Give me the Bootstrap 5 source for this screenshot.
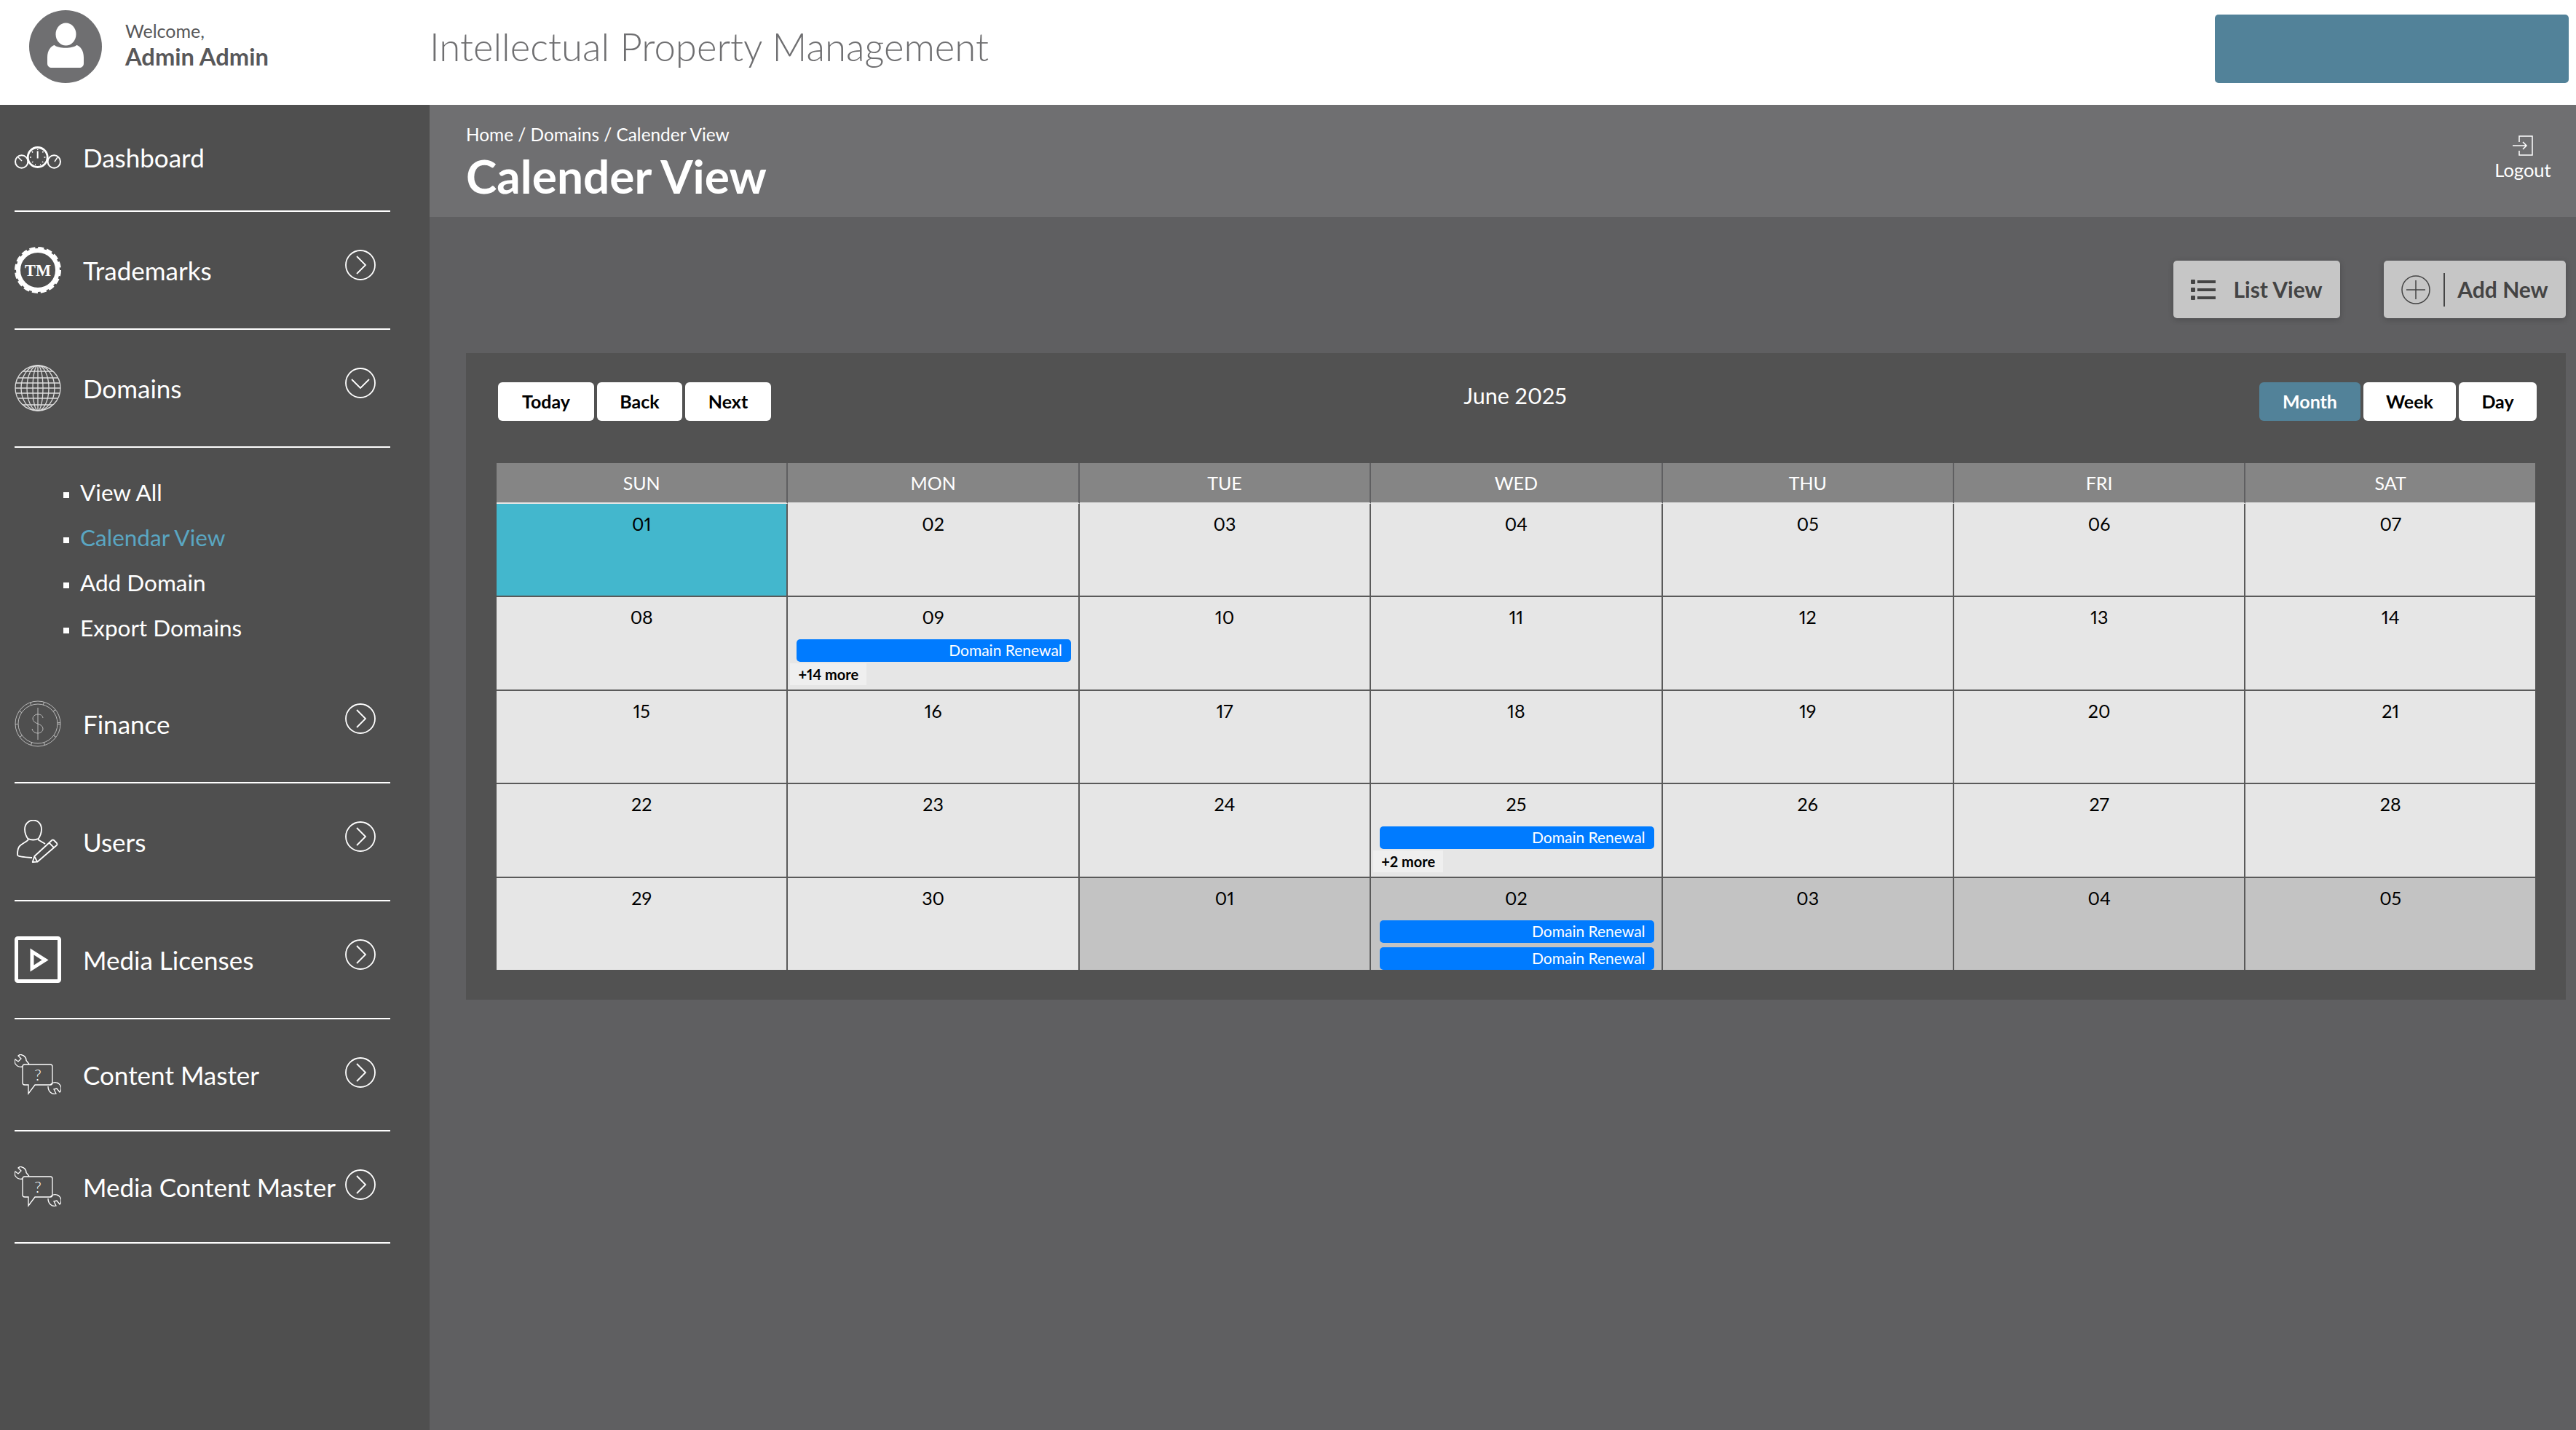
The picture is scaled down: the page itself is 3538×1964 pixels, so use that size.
<!DOCTYPE html>
<html lang="en">
<head>
    <meta charset="UTF-8">
    <title>Intellectual Property Management</title>
    <link href="https://cdn.jsdelivr.net/npm/bootstrap@5.3.0/dist/css/bootstrap.min.css" rel="stylesheet">
    <style>
        body { font-family: "Lato", "Liberation Sans", sans-serif; background: #5f5f61; color: #fff; min-height: 1964px; font-variant-numeric: proportional-nums; }

        /* Top header */
        .top-head { height: 144px; background: #fff; padding-bottom: 16px; }
        .avatar-box { width: 100px; height: 100px; margin-left: 40px; }
        .user-box { width: 450px; padding-left: 32px; margin-bottom: 4px; color: #58585a; }
        .user-hello { font-size: 25px; line-height: 32px; }
        .user-name { font-size: 32.700px; line-height: 40px; font-weight: 700; }
        .app-title { font-size: 52.700px; font-weight: 300; color: #6f6f71; line-height: 1; }
        .top-action { width: 486px; height: 94px; margin: 6px 10px 0 0; background: #528299; border-radius: 5px; border: 0; }

        /* Sidebar */
        .page-wrap { min-height: 1820px; }
        .side-bar { width: 590px; background: #4f4f4f; padding: 0 54px 0 20px; flex-shrink: 0; }
        .side-item { height: 162px; border-bottom: 2px solid #fff; font-size: 35px; color: #fff; text-decoration: none; }
        .side-first { height: 147px; }
        .side-short { height: 154px; }
        .side-ico { width: 94px; flex-shrink: 0; }
        .side-ico svg { display: block; }
        .side-chev { margin: 0 20px 14px auto; flex-shrink: 0; }
        .side-short .side-chev { margin-bottom: 7px; }
        .side-sub { padding: 31px 0 20px 67px; height: 299px; margin: 0; font-size: 31.500px; }
        .side-sub li { height: 62px; }
        .side-sub li::before { content: ""; width: 8px; height: 8px; background: #fff; margin: 6px 15px 0 0; }
        .side-sub a { color: #fff; text-decoration: none; }
        .side-sub a.is-current { color: #5aa6c2; }

        /* Page title bar */
        .crumb-bar { height: 154px; background: #6f6f71; padding: 23px 28px 0 50px; }
        .crumb-text { font-size: 24.400px; line-height: 36px; }
        .page-title { font-size: 64px; font-weight: 700; line-height: 76px; margin: 1px 0 0; }
        .logout-link { color: #fff; text-decoration: none; font-size: 25.500px; line-height: 38px; width: 90px; margin-top: 19px; }

        /* Action buttons */
        .action-row { padding: 60px 14px 48px 50px; gap: 60px; }
        .act-btn { height: 79px; background: #c6c6c6; color: #444; font-size: 30px; font-weight: 700; border: 0; border-radius: 5px; box-shadow: 0 2px 8px rgba(0,0,0,.2); padding: 0; }
        .act-list { width: 229px; gap: 24px; }
        .act-add { width: 250px; }
        .act-sep { width: 2px; height: 46px; background: #444; margin: 0 17px 0 18px; }

        /* Calendar */
        .cal-panel { margin: 0 14px 0 50px; padding: 40px 40px 41px 42px; background: #525252; }
        .cal-bar { height: 53px; margin-bottom: 58px; padding-left: 2px; }
        .cal-btn { height: 53px; background: #fff; color: #000; font-size: 25px; font-weight: 700; border: 0; border-radius: 6px; padding: 0; }
        .cal-btn.is-on { background: #528299; color: #fff; }
        .cal-btn-group { gap: 4px; }
        .w-today { width: 132px; } .w-back { width: 117px; } .w-next { width: 118px; }
        .w-month { width: 139px; } .w-week { width: 127px; } .w-day { width: 107px; }
        .cal-month { font-size: 30.500px; line-height: 40px; margin-top: -2px; }
        .cal-grid { display: grid; grid-template-columns: repeat(6, 400.400px) 1fr; margin-right: 2px; }
        .cal-head { height: 56px; background: #858585; border-right: 2px solid #5f5f61; border-bottom: 2px solid #e6e6e6; font-size: 25px; text-align: center; line-height: 54px; }
        .cal-cell { height: 128.400px; background: #e6e6e6; color: #000; border-right: 2px solid #5a5a5a; border-bottom: 2px solid #5a5a5a; padding-top: 9px; text-align: center; font-size: 25px; line-height: 36px; overflow: hidden; }
        .cal-head:nth-child(7n), .cal-cell:nth-child(7n) { border-right: 0; }
        .cal-cell.is-today { background: #43b7cd; }
        .cal-cell.is-off { background: #c3c3c3; }
        .cal-cell.is-last { height: 126.400px; border-bottom: 0; }
        .cal-day { margin-bottom: 13px; }
        .cal-event { height: 31px; margin: 0 10px 6px 12px; padding-right: 12px; background: #007bff; color: #fff; border-radius: 5px; font-size: 21px; line-height: 30px; text-align: right; }
        .cal-more { display: block; width: fit-content; margin: -4px 0 0 3px; padding: 0 11px; background: #efefef; font-size: 20px; font-weight: 700; line-height: 30px; }
    </style>
</head>
<body>
    <header class="top-head d-flex align-items-center">
        <div class="avatar-box">
            <svg width="100" height="100" viewBox="0 0 100 100"><circle cx="50" cy="50" r="50" fill="#6f6f71"/><ellipse cx="50.500" cy="33" rx="14" ry="15.500" fill="#fff"/><path d="M35 48c5 5 25 5 30 0 5 1 10 7 10 17v8c0 4-3 6-6 6H31c-3 0-6-2-6-6v-8c0-10 5-16 10-17z" fill="#fff"/></svg>
        </div>
        <div class="user-box">
            <div class="user-hello">Welcome,</div>
            <div class="user-name">Admin Admin</div>
        </div>
        <div class="app-title flex-grow-1">Intellectual Property Management</div>
        <button class="top-action" type="button"></button>
    </header>

    <div class="page-wrap d-flex">
        <nav class="side-bar">
            <a href="#" class="side-item side-first d-flex align-items-center">
                <span class="side-ico">
                    <svg width="64" height="32" viewBox="0 0 64 32" fill="none" stroke="#fff" stroke-width="2"><circle cx="9.700" cy="21" r="8.700"/><circle cx="54.300" cy="21" r="8.700"/><path d="M5 15l5 5M59 15l-4 6" stroke-width="1.500"/><circle cx="31.700" cy="15" r="13.500" fill="#4f4f4f" stroke-width="2.800"/><path d="M31.700 6.500v10" stroke-width="2"/><path d="M31.700 4v1M24 7l1 1.500M39.400 7l-1 1.500M21 15h2M40.400 15h2M24 22l1.500-1M39.400 22l-1.500-1M28 25h1M35 25h1" stroke-width="1.500"/></svg>
                </span>
                Dashboard
            </a>
            <a href="#" class="side-item d-flex align-items-center">
                <span class="side-ico">
                    <svg width="64" height="64" viewBox="0 0 64 64" fill="none" stroke="#fff"><circle cx="32" cy="32" r="27" stroke-width="6"/><circle cx="32" cy="32" r="30" stroke-width="4" stroke-dasharray="8 3.780"/><text x="32" y="40" text-anchor="middle" fill="#fff" stroke="none" font-family="Liberation Serif" font-weight="700" font-size="24" textLength="36" lengthAdjust="spacingAndGlyphs">TM</text></svg>
                </span>
                Trademarks
                <svg class="side-chev" width="42" height="42" viewBox="0 0 42 42" fill="none" stroke="#fff" stroke-width="1.800"><circle cx="21" cy="21" r="20"/><path d="M16 9l12 12-12 12"/></svg>
            </a>
            <a href="#" class="side-item d-flex align-items-center">
                <span class="side-ico">
                    <svg width="64" height="64" viewBox="0 0 64 64" fill="none" stroke="#ddd" stroke-width="1.300"><circle cx="32" cy="32" r="31"/><ellipse cx="32" cy="32" rx="23" ry="31"/><ellipse cx="32" cy="32" rx="15" ry="31"/><ellipse cx="32" cy="32" rx="7" ry="31"/><path d="M32 1v62M1 32h62M4 18h56M4 46h56M11 9h42M11 55h42M2 25h60M2 39h60"/></svg>
                </span>
                Domains
                <svg class="side-chev" width="42" height="42" viewBox="0 0 42 42" fill="none" stroke="#fff" stroke-width="1.800"><circle cx="21" cy="21" r="20"/><path d="M9 16l12 12 12-12"/></svg>
            </a>
            <ul class="side-sub list-unstyled">
                <li class="d-flex align-items-center"><a href="#">View All</a></li>
                <li class="d-flex align-items-center"><a href="#" class="is-current">Calendar View</a></li>
                <li class="d-flex align-items-center"><a href="#">Add Domain</a></li>
                <li class="d-flex align-items-center"><a href="#">Export Domains</a></li>
            </ul>
            <a href="#" class="side-item d-flex align-items-center">
                <span class="side-ico">
                    <svg width="64" height="64" viewBox="0 0 64 64" fill="none" stroke="#bbb" stroke-width="1"><circle cx="32" cy="32" r="31"/><circle cx="32" cy="32" r="27"/><circle cx="32" cy="32" r="29" stroke-width="4" stroke-dasharray="1 17"/><path d="M32 10v44"/><path d="M39 24c-1-4-4-5-7-5-4 0-7 3-7 6 0 8 14 6 14 14 0 3-3 6-7 6-4 0-7-2-8-6"/></svg>
                </span>
                Finance
                <svg class="side-chev" width="42" height="42" viewBox="0 0 42 42" fill="none" stroke="#fff" stroke-width="1.800"><circle cx="21" cy="21" r="20"/><path d="M16 9l12 12-12 12"/></svg>
            </a>
            <a href="#" class="side-item d-flex align-items-center">
                <span class="side-ico">
                    <svg width="64" height="60" viewBox="0 0 64 60" fill="none" stroke="#fff" stroke-width="1.800" stroke-linejoin="round"><path d="M19 27c-3-4-5-9-5-14C14 6 19 .5 25.700 .5S37 6 37 13c0 5-2 10-5 14"/><path d="M19 26c3 2 10 2 13 0"/><path d="M19 27c-2 3-8 5-12 9-3 3-3 8-3 12 0 2 5 3 20 4"/><path d="M32 27c3 2 7 4 10 6"/><path d="M24.700 58l2.600-8L51.300 28a2 2 0 0 1 2.700 0l4 4a2 2 0 0 1 0 2.700L31.300 57.700zM47.300 31.300l7 7M27.300 50.300l4 7.400"/></svg>
                </span>
                Users
                <svg class="side-chev" width="42" height="42" viewBox="0 0 42 42" fill="none" stroke="#fff" stroke-width="1.800"><circle cx="21" cy="21" r="20"/><path d="M16 9l12 12-12 12"/></svg>
            </a>
            <a href="#" class="side-item d-flex align-items-center">
                <span class="side-ico">
                    <svg width="64" height="64" viewBox="0 0 64 64" fill="none" stroke="#fff"><rect x="2.500" y="2.500" width="59" height="59" rx="2" stroke-width="5"/><path d="M24 21l18 11.500-18 11.500z" stroke-width="5"/></svg>
                </span>
                Media Licenses
                <svg class="side-chev" width="42" height="42" viewBox="0 0 42 42" fill="none" stroke="#fff" stroke-width="1.800"><circle cx="21" cy="21" r="20"/><path d="M16 9l12 12-12 12"/></svg>
            </a>
            <a href="#" class="side-item side-short d-flex align-items-center">
                <span class="side-ico">
                    <svg width="64" height="56" viewBox="0 0 64 56" fill="none" stroke="#fff" stroke-width="1.300"><path d="M14 14h35c2 0 3 1 3 3v22c0 2-1 3-3 3H28l-9 12V42h-5c-2 0-3-1-3-3V17c0-2 1-3 3-3z"/><path d="M9 .5c4 1 7 4 7 8l4 5M11 17c-4 1-8-1-10-4-1-2-1-4 0-6l4 3 4-4-4-4c1-1 3-2 5-2"/><path d="M49 42c2-3 6-4 9-3 4 1 6 5 6 8 0 2-1 4-2 5l-4-5-4 1 3 6c-3 1-6 0-8-2-2-2-3-5-3-8"/><text x="32" y="36" text-anchor="middle" fill="#fff" stroke="none" font-family="Lato" font-weight="300" font-size="22">?</text></svg>
                </span>
                Content Master
                <svg class="side-chev" width="42" height="42" viewBox="0 0 42 42" fill="none" stroke="#fff" stroke-width="1.800"><circle cx="21" cy="21" r="20"/><path d="M16 9l12 12-12 12"/></svg>
            </a>
            <a href="#" class="side-item side-short d-flex align-items-center">
                <span class="side-ico">
                    <svg width="64" height="56" viewBox="0 0 64 56" fill="none" stroke="#fff" stroke-width="1.300"><path d="M14 14h35c2 0 3 1 3 3v22c0 2-1 3-3 3H28l-9 12V42h-5c-2 0-3-1-3-3V17c0-2 1-3 3-3z"/><path d="M9 .5c4 1 7 4 7 8l4 5M11 17c-4 1-8-1-10-4-1-2-1-4 0-6l4 3 4-4-4-4c1-1 3-2 5-2"/><path d="M49 42c2-3 6-4 9-3 4 1 6 5 6 8 0 2-1 4-2 5l-4-5-4 1 3 6c-3 1-6 0-8-2-2-2-3-5-3-8"/><text x="32" y="36" text-anchor="middle" fill="#fff" stroke="none" font-family="Lato" font-weight="300" font-size="22">?</text></svg>
                </span>
                Media Content Master
                <svg class="side-chev" width="42" height="42" viewBox="0 0 42 42" fill="none" stroke="#fff" stroke-width="1.800"><circle cx="21" cy="21" r="20"/><path d="M16 9l12 12-12 12"/></svg>
            </a>
        </nav>

        <main class="flex-grow-1">
            <div class="crumb-bar d-flex justify-content-between align-items-start">
                <div>
                    <div class="crumb-text">Home / Domains / Calender View</div>
                    <h1 class="page-title">Calender View</h1>
                </div>
                <a href="#" class="logout-link d-flex flex-column align-items-center">
                    <svg width="28" height="28" viewBox="0 0 28 28" fill="none" stroke="#fff" stroke-width="1.500"><path d="M9 9V1h18v26H9v-6"/><path d="M0 14h19M14 9l5 5-5 5"/></svg>
                    Logout
                </a>
            </div>

            <div class="action-row d-flex justify-content-end">
                <button type="button" class="act-btn act-list d-flex align-items-center justify-content-center">
                    <svg width="34" height="28" viewBox="0 0 34 28" fill="#444"><rect y="0" width="6" height="6" rx="1"/><rect y="11" width="6" height="6" rx="1"/><rect y="22" width="6" height="6" rx="1"/><rect x="9" y="1" width="25" height="4"/><rect x="9" y="12" width="25" height="4"/><rect x="9" y="23" width="25" height="4"/></svg>
                    List View
                </button>
                <button type="button" class="act-btn act-add d-flex align-items-center justify-content-center">
                    <svg width="40" height="40" viewBox="0 0 40 40" fill="none" stroke="#444" stroke-width="1.500"><circle cx="20" cy="20" r="19"/><path d="M20 7v26M7 20h26"/></svg>
                    <span class="act-sep"></span>
                    Add New
                </button>
            </div>

            <section class="cal-panel">
                <div class="cal-bar d-flex justify-content-between align-items-start">
                    <div class="cal-btn-group d-flex">
                        <button type="button" class="cal-btn w-today">Today</button>
                        <button type="button" class="cal-btn w-back">Back</button>
                        <button type="button" class="cal-btn w-next">Next</button>
                    </div>
                    <div class="cal-month">June 2025</div>
                    <div class="cal-btn-group d-flex">
                        <button type="button" class="cal-btn w-month is-on">Month</button>
                        <button type="button" class="cal-btn w-week">Week</button>
                        <button type="button" class="cal-btn w-day">Day</button>
                    </div>
                </div>

                <div class="cal-grid">
                    <div class="cal-head">SUN</div><div class="cal-head">MON</div><div class="cal-head">TUE</div><div class="cal-head">WED</div><div class="cal-head">THU</div><div class="cal-head">FRI</div><div class="cal-head">SAT</div>

                    <div class="cal-cell is-today"><div class="cal-day">01</div></div>
                    <div class="cal-cell"><div class="cal-day">02</div></div>
                    <div class="cal-cell"><div class="cal-day">03</div></div>
                    <div class="cal-cell"><div class="cal-day">04</div></div>
                    <div class="cal-cell"><div class="cal-day">05</div></div>
                    <div class="cal-cell"><div class="cal-day">06</div></div>
                    <div class="cal-cell"><div class="cal-day">07</div></div>

                    <div class="cal-cell"><div class="cal-day">08</div></div>
                    <div class="cal-cell"><div class="cal-day">09</div><div class="cal-event">Domain Renewal</div><a class="cal-more text-decoration-none text-black">+14 more</a></div>
                    <div class="cal-cell"><div class="cal-day">10</div></div>
                    <div class="cal-cell"><div class="cal-day">11</div></div>
                    <div class="cal-cell"><div class="cal-day">12</div></div>
                    <div class="cal-cell"><div class="cal-day">13</div></div>
                    <div class="cal-cell"><div class="cal-day">14</div></div>

                    <div class="cal-cell"><div class="cal-day">15</div></div>
                    <div class="cal-cell"><div class="cal-day">16</div></div>
                    <div class="cal-cell"><div class="cal-day">17</div></div>
                    <div class="cal-cell"><div class="cal-day">18</div></div>
                    <div class="cal-cell"><div class="cal-day">19</div></div>
                    <div class="cal-cell"><div class="cal-day">20</div></div>
                    <div class="cal-cell"><div class="cal-day">21</div></div>

                    <div class="cal-cell"><div class="cal-day">22</div></div>
                    <div class="cal-cell"><div class="cal-day">23</div></div>
                    <div class="cal-cell"><div class="cal-day">24</div></div>
                    <div class="cal-cell"><div class="cal-day">25</div><div class="cal-event">Domain Renewal</div><a class="cal-more text-decoration-none text-black">+2 more</a></div>
                    <div class="cal-cell"><div class="cal-day">26</div></div>
                    <div class="cal-cell"><div class="cal-day">27</div></div>
                    <div class="cal-cell"><div class="cal-day">28</div></div>

                    <div class="cal-cell is-last"><div class="cal-day">29</div></div>
                    <div class="cal-cell is-last"><div class="cal-day">30</div></div>
                    <div class="cal-cell is-last is-off"><div class="cal-day">01</div></div>
                    <div class="cal-cell is-last is-off"><div class="cal-day">02</div><div class="cal-event">Domain Renewal</div><div class="cal-event">Domain Renewal</div></div>
                    <div class="cal-cell is-last is-off"><div class="cal-day">03</div></div>
                    <div class="cal-cell is-last is-off"><div class="cal-day">04</div></div>
                    <div class="cal-cell is-last is-off"><div class="cal-day">05</div></div>
                </div>
            </section>
        </main>
    </div>

    <script src="https://cdn.jsdelivr.net/npm/bootstrap@5.3.0/dist/js/bootstrap.bundle.min.js"></script>
</body>
</html>
